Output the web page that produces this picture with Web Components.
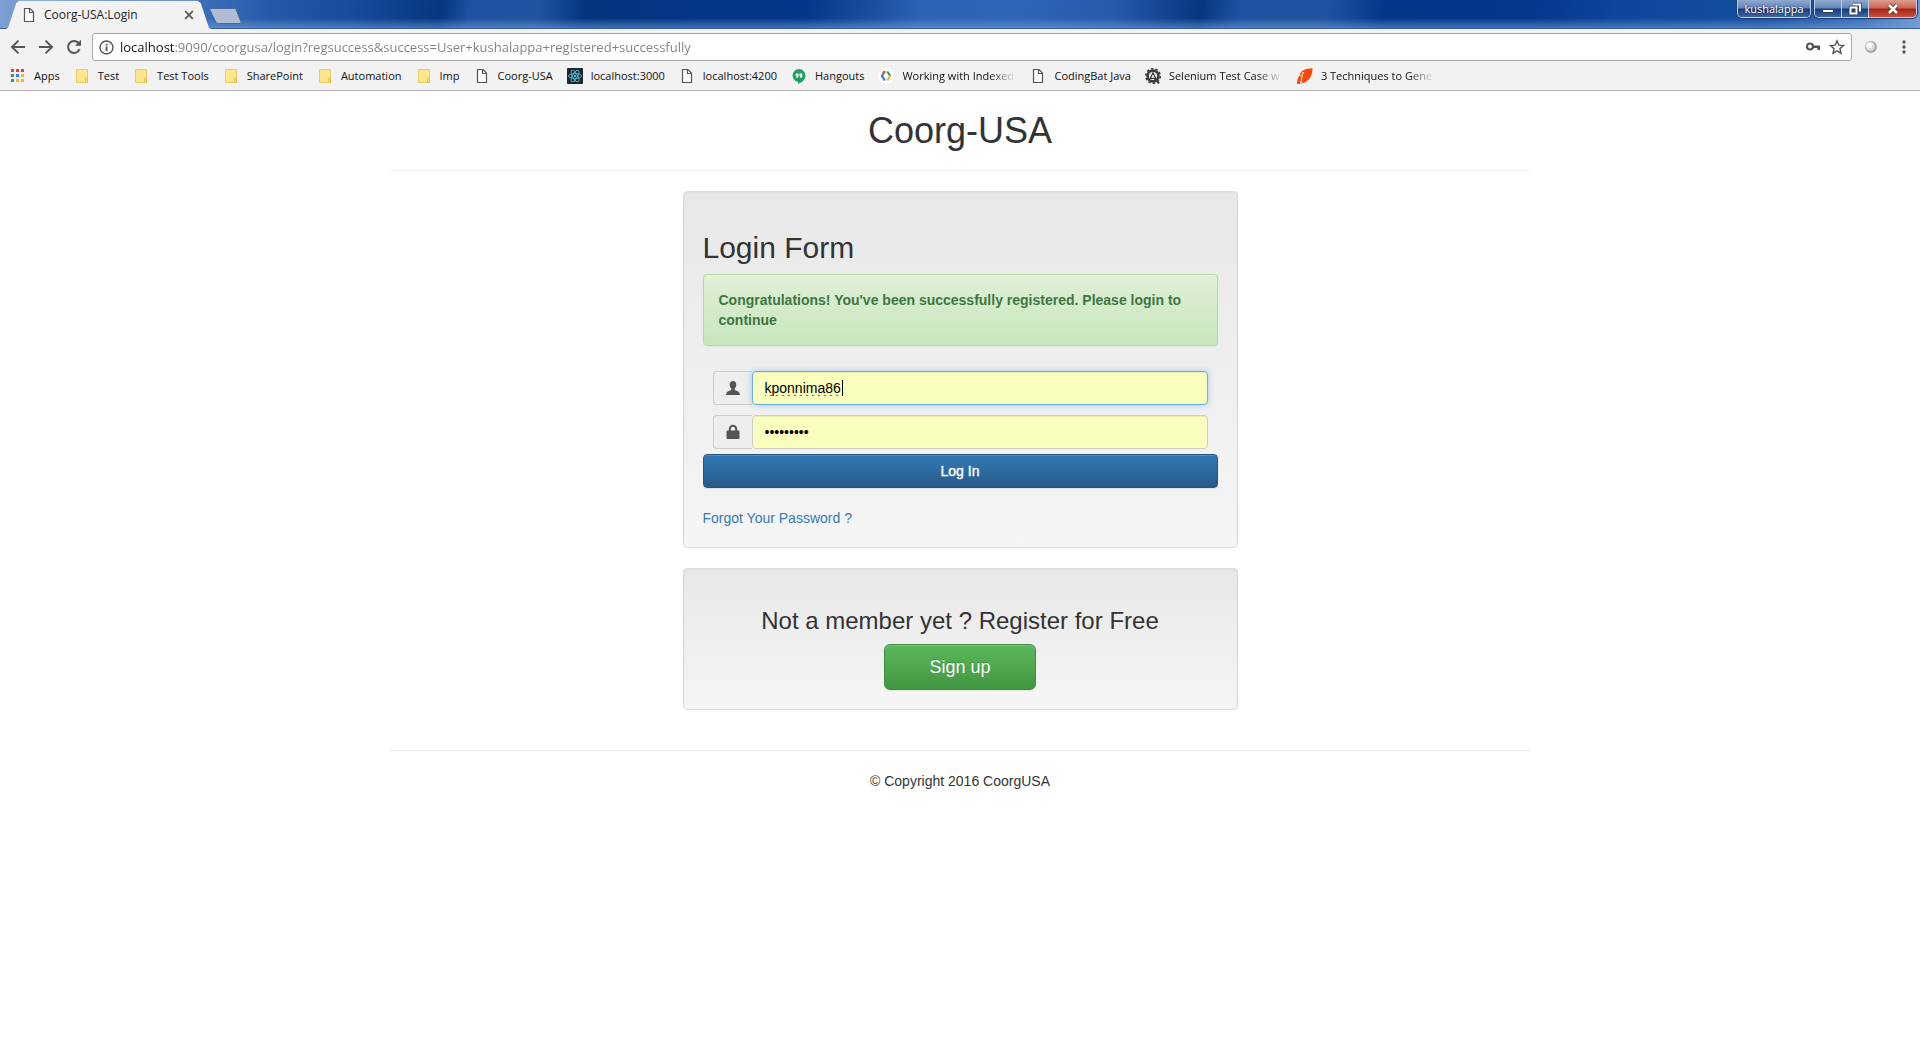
<!DOCTYPE html>
<html lang="en">
<head>
<meta charset="utf-8">
<title>Coorg-USA:Login</title>
<style>
  body { margin: 0; background: #fff; }
</style>
</head>
<body>
<browser-window></browser-window>

<template id="browser-window">
  <style>
    :host { display: flex; flex-direction: column; min-height: 100vh; --chrome: #f2f2f2; --ui: "Open Sans", "Noto Sans", sans-serif; }
  </style>
  <title-bar></title-bar>
  <address-bar></address-bar>
  <bookmark-bar></bookmark-bar>
  <login-page></login-page>
</template>

<template id="title-bar">
  <style>
    :host {
      display: flex; align-items: flex-end; height: 29px; box-sizing: border-box; padding-left: 6px; padding-right: 3px;
      border-bottom: 1px solid #365f9f;
      background:
        linear-gradient(180deg, rgba(120,160,215,0) 18px, rgba(120,160,215,.55) 28px),
        linear-gradient(100deg, #7d9fd3 0, #4f7ec2 6%, #3468b4 12%, #2759a8 14%, #1a4c9c 18%, #06367f 23%, #1f519f 24.5%, #21539f 28%, #05357f 30.5%, #05378a 42%, #1a4b9b 45%, #2c63b5 48%, #2e66b8 53%, #2859aa 58%, #06367f 62.5%, #2052a0 64.5%, #20529f 69%, #04368a 72%, #05388e 80%, #0e459d 84%, #15509f 92%, #3d70bb 97%, #7799cf 100%);
    }
    .newtab { align-self: flex-start; margin-top: 8px; padding: 0; border: 0; background: none; height: 16px; width: 34px; margin-left: -2px; }
    .newtab svg { display: block; }
    .controls { margin-left: auto; align-self: flex-start; display: flex; gap: 3px; font-family: var(--ui); }
    .glass { display: flex; border: 1px solid #c3d2e8; border-top: 0; border-radius: 0 0 5px 5px; overflow: hidden; box-shadow: 0 0 0 1px #1d3c6e; }
    button.c {
      display: flex; align-items: center; justify-content: center; box-sizing: border-box; height: 17px; padding: 0; border: 0;
      font: 600 11px/16px var(--ui); color: #fff; text-shadow: 0 0 2px #123;
      background: linear-gradient(#8fa9d0 0, #6485b8 8px, #153b7a 9px, #3e66a6 17px);
    }
    button.user { width: 72px; font-weight: 400; }
    button.min, button.max { width: 27px; border-right: 1px solid #c3d2e8; }
    button.close { width: 47px; background: linear-gradient(#dd9c8e 0, #cb6655 8px, #a82414 9px, #c95040 17px); }
  </style>
  <browser-tab>Coorg-USA:Login</browser-tab>
  <button class="newtab" aria-label="New tab"><svg width="34" height="16" viewBox="0 0 34 16"><path d="M1.500 .5h24q1 0 1.500 1l5 12.500q.5 1.500-1 1.500H9q-1.500 0-2-1L1 2Q.4.500 1.500.5z" fill="#b0bdd2" stroke="#47699f"/></svg></button>
  <div class="controls">
    <div class="glass"><button class="c user">kushalappa</button></div>
    <div class="glass">
      <button class="c min" aria-label="Minimize"><svg width="14" height="14"><path d="M1.500 7.500h11v3h-11z" fill="#fff" stroke="#344"/></svg></button>
      <button class="c max" aria-label="Restore"><svg width="14" height="14"><path d="M5 2.500h7v7M2.500 5.500h6v6h-6z" fill="none" stroke="#345" stroke-width="3.500"/><path d="M5 2.500h7v7M2.500 5.500h6v6h-6z" fill="none" stroke="#fff" stroke-width="2"/></svg></button>
      <button class="c close" aria-label="Close"><svg width="16" height="14"><path d="M4 3l8 8M12 3l-8 8" stroke="#533" stroke-width="4.500"/><path d="M4 3l8 8M12 3l-8 8" stroke="#fff" stroke-width="2.600"/></svg></button>
    </div>
  </div>
</template>

<template id="browser-tab">
  <style>
    :host { display: flex; align-items: center; box-sizing: border-box; width: 205px; height: 29px; margin-bottom: -1px; padding: 1px 17px 0 15px; gap: 7px; color: #222; font: 12px/16px var(--ui);
      background: var(--chrome); clip-path: polygon(0 100%, 1% 96%, 5% 10%, 6.500% 3%, 93.500% 3%, 95% 10%, 99% 96%, 100% 100%); }
    span { flex: 1; white-space: nowrap; }
    button { padding: 0; border: 0; background: none; display: flex; }
  </style>
  <ui-icon name="page"></ui-icon><span><slot></slot></span>
  <button aria-label="Close tab"><svg width="10" height="10"><path d="M1.200 1.200l7.600 7.600M8.800 1.200L1.200 8.800" stroke="#5a5a5a" stroke-width="1.800"/></svg></button>
</template>

<template id="address-bar">
  <style>
    :host { display: flex; align-items: center; height: 32px; padding-top: 2px; padding-right: 8px; background: var(--chrome); }
    nav { display: flex; gap: 12px; padding: 0 10px; }
    button { display: flex; padding: 0; border: 0; background: none; }
    .field { flex: 1; display: flex; align-items: center; box-sizing: border-box; height: 28px; padding: 0 6px; background: #fff; border: 1px solid #a6a6a6; border-radius: 3px; }
    input { flex: 1; min-width: 0; border: 0; outline: 0; padding: 0; margin-left: 6px; font: 13px/20px var(--ui); -webkit-text-fill-color: transparent;
      background: linear-gradient(90deg, #111 55px, #808080 55px); -webkit-background-clip: text; background-clip: text; }
    .actions { display: flex; gap: 8px; }
    .ext { display: flex; gap: 16px; padding-left: 10px; }
  </style>
  <nav>
    <button aria-label="Back"><svg width="16" height="16" viewBox="0 0 16 16"><path d="M15 8H2.500M8.500 1.600L2 8l6.500 6.400" fill="none" stroke="#555" stroke-width="2"/></svg></button>
    <button aria-label="Forward"><svg width="16" height="16" viewBox="0 0 16 16"><path d="M1 8h12.500M7.500 1.600L14 8l-6.500 6.400" fill="none" stroke="#555" stroke-width="2"/></svg></button>
    <button aria-label="Reload"><svg width="16" height="16" viewBox="0 0 16 16"><path d="M13.600 10.200A6 6 0 1 1 12.600 4" fill="none" stroke="#555" stroke-width="2"/><path d="M15 .8v6H9z" fill="#555"/></svg></button>
  </nav>
  <div class="field">
    <svg width="15" height="15" viewBox="0 0 15 15"><circle cx="7.500" cy="7.500" r="6.500" fill="none" stroke="#555" stroke-width="1.400"/><path d="M6.600 6.500h1.900V11H6.600zM6.600 3.700h1.900v1.700H6.600z" fill="#555"/></svg>
    <input aria-label="Address" spellcheck="false" value="localhost:9090/coorgusa/login?regsuccess&amp;success=User+kushalappa+registered+successfully">
    <div class="actions">
      <button aria-label="Saved password"><svg width="16" height="16" viewBox="0 0 16 16"><circle cx="5" cy="7.500" r="3" fill="none" stroke="#555" stroke-width="2.200"/><path d="M8 6.500h7v4.500h-2.600V9H8z" fill="#555"/></svg></button>
      <button aria-label="Bookmark this page"><svg width="16" height="16" viewBox="0 0 16 16"><path d="M8 1.800l1.800 4.300 4.700.4-3.600 3.100 1.100 4.600L8 11.800l-4 2.400 1.100-4.600L1.500 6.500l4.700-.4z" fill="none" stroke="#555" stroke-width="1.400"/></svg></button>
    </div>
  </div>
  <div class="ext">
    <button aria-label="Extension"><svg width="18" height="16" viewBox="0 0 18 16"><circle cx="9" cy="8" r="6" fill="#a9a9a9"/><circle cx="8.200" cy="7.200" r="4.500" fill="#dedede"/><circle cx="7.500" cy="6.500" r="2.800" fill="#fafafa"/></svg></button>
    <button aria-label="Menu"><svg width="16" height="16"><g fill="#555"><circle cx="8" cy="3" r="1.700"/><circle cx="8" cy="8" r="1.700"/><circle cx="8" cy="13" r="1.700"/></g></svg></button>
  </div>
</template>

<template id="bookmark-bar">
  <style>
    :host { display: flex; align-items: center; gap: 14px; height: 26px; padding: 0 10px 1px; background: var(--chrome); border-bottom: 1px solid #b4b2b4; }
  </style>
  <book-mark icon="apps">Apps</book-mark>
  <book-mark icon="folder">Test</book-mark>
  <book-mark icon="folder">Test Tools</book-mark>
  <book-mark icon="folder">SharePoint</book-mark>
  <book-mark icon="folder">Automation</book-mark>
  <book-mark icon="folder">Imp</book-mark>
  <book-mark icon="page">Coorg-USA</book-mark>
  <book-mark icon="react">localhost:3000</book-mark>
  <book-mark icon="page">localhost:4200</book-mark>
  <book-mark icon="hangouts">Hangouts</book-mark>
  <book-mark icon="code" long>Working with Indexed</book-mark>
  <book-mark icon="page">CodingBat Java</book-mark>
  <book-mark icon="selenium" long>Selenium Test Case w</book-mark>
  <book-mark icon="leaf" long>3 Techniques to Gene</book-mark>
</template>

<template id="book-mark">
  <style>
    :host { display: block; }
    a { display: flex; align-items: center; gap: 8px; color: #111; text-decoration: none; font: 11px/16px var(--ui); white-space: nowrap; }
    :host([long]) span { width: 114px; overflow: hidden; -webkit-mask-image: linear-gradient(90deg, #000 88px, transparent 114px); mask-image: linear-gradient(90deg, #000 88px, transparent 114px); }
  </style>
  <a href="#"><ui-icon></ui-icon><span><slot></slot></span></a>
</template>

<template id="login-page">
  <style>
    :host { display: block; width: 100%; max-width: 1140px; box-sizing: border-box; margin: 0 auto; color: #333; font: 14px/20px "Liberation Sans", Arial, sans-serif; }
    h1, h2, h3 { font-weight: 400; margin: 20px 0 10px; }
    h1 { font-size: 36px; line-height: 40px; margin-bottom: 19px; text-align: center; }
    h2 { font-size: 30px; line-height: 33px; }
    h3 { font-size: 24px; line-height: 26px; text-align: center; }
    hr { border: 0; border-top: 1px solid #eee; margin: 0 0 20px; }
    main { max-width: 555px; margin: 0 auto; display: flex; flex-direction: column; gap: 20px; }
    .fields { display: flex; flex-direction: column; gap: 10px; padding: 5px 10px; }
    button { display: block; font-family: inherit; color: #fff; text-shadow: 0 -1px 0 rgba(0,0,0,.2); box-shadow: inset 0 1px 0 rgba(255,255,255,.15), 0 1px 1px rgba(0,0,0,.075); }
    .login { width: 100%; padding: 6px 12px; font-size: 14px; line-height: 20px; border: 1px solid #245580; border-radius: 4px; background: linear-gradient(#337ab7, #265a88); -webkit-text-stroke: 0.4px #fff; }
    .signup { margin: 0 auto; padding: 10px 44px; font-size: 18px; line-height: 24px; border: 1px solid #3e8f3e; border-radius: 6px; background: linear-gradient(#5cb85c, #419641); }
    p { margin: 20px 0 0; }
    a { color: #337ab7; text-decoration: none; }
    footer { margin-top: 40px; text-align: center; }
  </style>
  <h1>Coorg-USA</h1>
  <hr>
  <main>
    <well-panel>
      <form onsubmit="return false">
        <h2>Login Form</h2>
        <success-alert>Congratulations! You've been successfully registered. Please login to continue</success-alert>
        <div class="fields">
          <icon-field icon="user" type="text" label="Username" value="kponnima86" active></icon-field>
          <icon-field icon="lock" type="password" label="Password" value="kponnima8"></icon-field>
        </div>
        <button class="login">Log In</button>
        <p><a href="#">Forgot Your Password ?</a></p>
      </form>
    </well-panel>
    <well-panel>
      <h3>Not a member yet ? Register for Free</h3>
      <button class="signup">Sign up</button>
    </well-panel>
  </main>
  <footer><hr>© Copyright 2016 CoorgUSA</footer>
</template>

<template id="well-panel">
  <style>
    :host { display: flow-root; padding: 19px; border: 1px solid #dcdcdc; border-radius: 4px; background: linear-gradient(#e8e8e8, #f5f5f5); box-shadow: inset 0 1px 3px rgba(0,0,0,.05), 0 1px 0 rgba(255,255,255,.1); }
  </style>
  <slot></slot>
</template>

<template id="success-alert">
  <style>
    :host { display: block; margin-bottom: 20px; padding: 15px; border: 1px solid #b2dba1; border-radius: 4px; color: #3c763d; font-weight: 700; text-shadow: 0 1px 0 rgba(255,255,255,.2); background: linear-gradient(#dff0d8, #c8e5bc); box-shadow: inset 0 1px 0 rgba(255,255,255,.25), 0 1px 2px rgba(0,0,0,.05); }
  </style>
  <slot></slot>
</template>

<template id="icon-field">
  <style>
    :host { display: flex; }
    label { display: flex; align-items: center; justify-content: center; box-sizing: border-box; width: 39px; border: 1px solid #ccc; border-right: 0; border-radius: 4px 0 0 4px; background: #eee; }
    input { flex: 1; min-width: 0; box-sizing: border-box; height: 34px; padding: 6px 12px; border: 1px solid #ccc; border-radius: 4px; outline: 0; background: #faffbd; color: #000; font: 14px/20px "Liberation Sans", Arial, sans-serif; box-shadow: inset 0 1px 1px rgba(0,0,0,.075); }
    :host([active]) input { border-color: #66afe9; box-shadow: inset 0 1px 1px rgba(0,0,0,.075), 0 0 6px rgba(102,175,233,.6); text-decoration: spelling-error;
      caret-color: transparent; background: linear-gradient(#000, #000) 89px 8px / 1px 16px no-repeat #faffbd; }
  </style>
  <label for="box"><ui-icon></ui-icon></label>
  <input id="box">
</template>

<script>
const icons = {
  page: '<path d="M3.500 1.500h5.500l3.500 3.500v9.500h-9z" fill="#fdfdfd" stroke="#555" stroke-width="1.200"/><path d="M8.500 1.500v4h4" fill="none" stroke="#555" stroke-width="1.200"/>',
  folder: '<path d="M2.500 1.500h11v13h-11z" fill="#ffe68c" stroke="#e8cb6a"/><path d="M11.500 14.500v-3.500l1-1.500 1 1.500v3.500z" fill="#ffe07a" stroke="#e3bf4d"/>',
  apps: '<g fill="#db4437"><path d="M1 1h3v3H1zM6 1h3v3H6zM11 1h3v3h-3z"/></g><path d="M1 6h3v3H1zM1 11h3v3H1z" fill="#36a165"/><path d="M6 6h3v3H6z" fill="#3b7ded"/><path d="M11 6h3v3h-3zM6 11h3v3H6zM11 11h3v3h-3z" fill="#f2b42c"/>',
  react: '<rect width="16" height="16" rx="1" fill="#20232a"/><g fill="none" stroke="#53b9d6" stroke-width=".9"><ellipse cx="8" cy="8" rx="6.500" ry="2.500"/><ellipse cx="8" cy="8" rx="6.500" ry="2.500" transform="rotate(60 8 8)"/><ellipse cx="8" cy="8" rx="6.500" ry="2.500" transform="rotate(120 8 8)"/></g><circle cx="8" cy="8" r="1.300" fill="#53b9d6"/>',
  hangouts: '<path d="M8 1a6.500 6.500 0 0 0-1 12.900V16c4-1.600 7.500-4.500 7.500-8.500A6.500 6.500 0 0 0 8 1z" fill="#1f9e60"/><path d="M4.700 5.500h2.800v3L6.300 10H5.200l.8-1.700H4.700zM8.500 5.500h2.800v3L10.100 10H9l.8-1.700H8.500z" fill="#fff"/>',
  code: '<circle cx="8" cy="8" r="8" fill="#fff"/><g fill="none" stroke-width="2.200"><path d="M6.800 3.500L3.800 8" stroke="#4285f4"/><path d="M3.500 7.200l3.300 5.300" stroke="#3f74d8"/><path d="M6.800 3L5 5.700" stroke="#ea4335"/><path d="M9.200 3.500L12.300 8" stroke="#2a9a55"/><path d="M12.500 7.500l-3.300 5" stroke="#f4b72c"/></g>',
  selenium: '<circle cx="8" cy="8" r="5.400" fill="none" stroke="#3c3c3c" stroke-width="2.600"/><circle cx="8" cy="8" r="7.200" fill="none" stroke="#3c3c3c" stroke-width="1.600" stroke-dasharray="2.500 2.025"/><path d="M8 4.800L5.300 10.300h5.400z" fill="none" stroke="#3c3c3c" stroke-width="1.300"/><path d="M9.500 10l4.500 5.500" stroke="#3c3c3c" stroke-width="2"/>',
  leaf: '<path d="M15.500.3C8 .5 4 2.500 3 6.500c-.5 3 .5 6 1.500 9.200C10 14.500 15.500 10 15.500.3z" fill="#f9490a"/><path d="M0 16c0-4 1-7 3-9l1.500 8.700z" fill="#f9490a"/><path d="M3.200 7.800l2.200-1-1.800 8.400 2-1" fill="none" stroke="#fff" stroke-width="1"/><circle cx="6" cy="4.800" r=".9" fill="#fff"/>',
  user: '<path d="M8 1c2.200 0 3.500 1.700 3.300 4-.1 1.700-.8 2.700-1.500 3.500-.3 1 .2 1.600 1 2 2 .8 4 1.300 4.200 4.500H1c.2-3.200 2.200-3.700 4.200-4.500.8-.4 1.300-1 1-2C5.500 7.700 4.800 6.700 4.700 5 4.500 2.700 5.800 1 8 1z" fill="#555"/>',
  lock: '<path d="M4.800 8V5a3.200 3.200 0 0 1 6.400 0v3" fill="none" stroke="#555" stroke-width="2"/><rect x="1.500" y="6.500" width="13" height="8.500" rx="1" fill="#555"/>'
};

class Part extends HTMLElement {
  connectedCallback() {
    if (this.shadowRoot) return;
    const root = this.attachShadow({ mode: 'open' });
    root.append(document.getElementById(this.localName).content.cloneNode(true));
    this.ready(root);
  }
  ready() {}
}

class UiIcon extends HTMLElement {
  static observedAttributes = ['name'];
  constructor() { super(); this.attachShadow({ mode: 'open' }); }
  attributeChangedCallback() {
    this.shadowRoot.innerHTML = `<style>:host{display:block;flex:none;width:16px;height:16px}svg{display:block;overflow:visible}</style>
      <svg width="16" height="16" viewBox="0 0 16 16" aria-hidden="true">${icons[this.getAttribute('name')] || ''}</svg>`;
  }
}
customElements.define('ui-icon', UiIcon);

customElements.define('book-mark', class extends Part {
  ready(root) { root.querySelector('ui-icon').setAttribute('name', this.getAttribute('icon')); }
});

customElements.define('icon-field', class extends Part {
  ready(root) {
    const box = root.querySelector('input');
    root.querySelector('ui-icon').setAttribute('name', this.getAttribute('icon'));
    box.type = this.getAttribute('type');
    box.value = this.getAttribute('value');
    box.setAttribute('aria-label', this.getAttribute('label'));
    if (this.hasAttribute('active')) {
      box.focus();
      box.setSelectionRange(box.value.length, box.value.length);
    }
  }
});

for (const name of ['success-alert', 'well-panel', 'login-page', 'bookmark-bar', 'address-bar', 'browser-tab', 'title-bar', 'browser-window'])
  customElements.define(name, class extends Part {});
</script>
</body>
</html>
